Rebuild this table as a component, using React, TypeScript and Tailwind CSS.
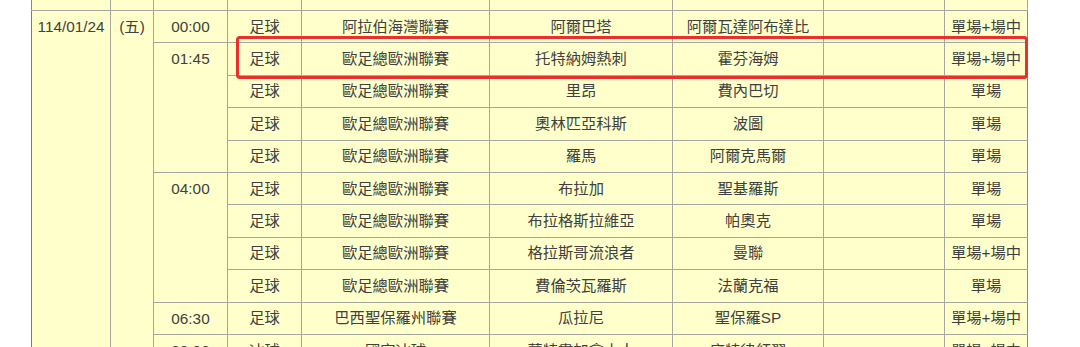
import React from 'react';

type Match = {
  time?: string;
  span?: number;
  sport: string;
  league: string;
  home: string;
  away: string;
  bet: string;
};

const matches: Match[] = [
  { time: '00:00', span: 1, sport: '足球', league: '阿拉伯海灣聯賽', home: '阿爾巴塔', away: '阿爾瓦達阿布達比', bet: '單場+場中' },
  { time: '01:45', span: 4, sport: '足球', league: '歐足總歐洲聯賽', home: '托特納姆熱刺', away: '霍芬海姆', bet: '單場+場中' },
  { sport: '足球', league: '歐足總歐洲聯賽', home: '里昂', away: '費內巴切', bet: '單場' },
  { sport: '足球', league: '歐足總歐洲聯賽', home: '奧林匹亞科斯', away: '波圖', bet: '單場' },
  { sport: '足球', league: '歐足總歐洲聯賽', home: '羅馬', away: '阿爾克馬爾', bet: '單場' },
  { time: '04:00', span: 4, sport: '足球', league: '歐足總歐洲聯賽', home: '布拉加', away: '聖基羅斯', bet: '單場' },
  { sport: '足球', league: '歐足總歐洲聯賽', home: '布拉格斯拉維亞', away: '帕奧克', bet: '單場' },
  { sport: '足球', league: '歐足總歐洲聯賽', home: '格拉斯哥流浪者', away: '曼聯', bet: '單場+場中' },
  { sport: '足球', league: '歐足總歐洲聯賽', home: '費倫茨瓦羅斯', away: '法蘭克福', bet: '單場' },
  { time: '06:30', span: 1, sport: '足球', league: '巴西聖保羅州聯賽', home: '瓜拉尼', away: '聖保羅SP', bet: '單場+場中' },
  { time: '08:00', span: 1, sport: '冰球', league: '國家冰球', home: '蒙特婁加拿大人', away: '底特律紅翼', bet: '單場+場中' },
];

const widths = [79, 43, 74, 74, 188, 183, 151, 121, 83];

const cell = 'border border-[#a6a6a0] text-center align-middle p-0 h-[32.4px]';

export default function App() {
  return (
    <div className="relative w-[1080px] h-[347px] overflow-hidden bg-white">
      <div className="pl-[31px]">
        <table
          className="border-collapse table-fixed w-[997px] bg-[#ffffcc] text-[#404040] text-[15.3px] leading-[18px]"
          style={{ fontFamily: '"Liberation Sans", Arial, "Noto Sans CJK TC", sans-serif' }}
        >
          <colgroup>
            {widths.map((w, i) => (
              <col key={i} style={{ width: w }} />
            ))}
          </colgroup>
          <tbody>
            {/* previous row, cut off at the top */}
            <tr>
              {widths.map((_, i) => (
                <td key={i} className="border border-t-0 border-[#a6a6a0] border-l-[#888] h-[10.5px] p-0" />
              ))}
            </tr>
            {matches.map((m, i) => (
              <tr key={i}>
                {i === 0 && (
                  <>
                    <td rowSpan={matches.length} className="border border-[#a6a6a0] border-l-[#7a7a7a] text-center align-top pt-[7px] p-0">
                      114/01/24
                    </td>
                    <td rowSpan={matches.length} className="border border-[#a6a6a0] text-center align-top pt-[7px] p-0">
                      (五)
                    </td>
                  </>
                )}
                {m.time && (
                  <td rowSpan={m.span} className="border border-[#a6a6a0] border-l-[#8a8a8a] text-center align-top pt-[7px] p-0">
                    {m.time}
                  </td>
                )}
                <td className={cell}>{m.sport}</td>
                <td className={cell}>{m.league}</td>
                <td className={cell}>{m.home}</td>
                <td className={cell}>{m.away}</td>
                <td className={cell}></td>
                <td className={cell + ' border-r-[#8a8a8a]'}>{m.bet}</td>
              </tr>
            ))}
          </tbody>
        </table>
      </div>

      {/* highlight marker */}
      <div className="absolute left-[236px] top-[36px] w-[792px] h-[43px] border-[3px] border-[#e8302c] rounded-[4px] pointer-events-none" />
    </div>
  );
}
